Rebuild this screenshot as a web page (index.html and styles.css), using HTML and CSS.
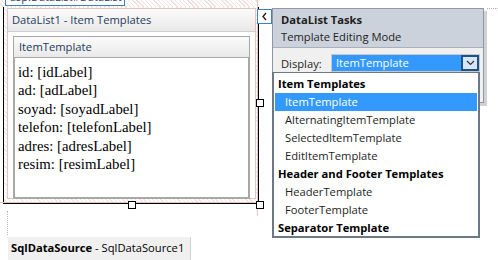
FILE: index.html
```html
<!DOCTYPE html>
<html lang="en">
<head>
    <meta charset="UTF-8">
    <title>DataList Designer</title>
    <link rel="stylesheet" href="styles.css">
</head>
<body>
    <div class="canvas">
        <div class="control-tag"><span class="tag-box"><span class="tag-text">asp:DataList#DataList1</span></span></div>
        <div class="top-dots"></div>

        <div class="datalist">
            <div class="templates-panel">
                <div class="panel-title">DataList1 - Item Templates</div>
                <div class="template-box">
                    <div class="template-title">ItemTemplate</div>
                    <div class="template-body">
                        <div>id: [idLabel]</div>
                        <div>ad: [adLabel]</div>
                        <div>soyad: [soyadLabel]</div>
                        <div>telefon: [telefonLabel]</div>
                        <div>adres: [adresLabel]</div>
                        <div>resim: [resimLabel]</div>
                    </div>
                </div>
            </div>
        </div>

        <div class="guide guide-h"></div>
        <div class="guide guide-v"></div>
        <div class="handle handle-right"></div>
        <div class="handle handle-bottom"></div>
        <div class="handle handle-corner"></div>

        <div class="side-dots"></div>
        <div class="source-tag"><b>SqlDataSource</b> - SqlDataSource1</div>

        <button class="smart-tag">
            <svg width="7" height="9" viewBox="0 0 7 9"><path d="M5 1 L2 4.5 L5 8" fill="none" stroke="#1e1e1e" stroke-width="1.3"/></svg>
        </button>

        <div class="tasks">
            <div class="tasks-head">
                <div class="tasks-title">DataList Tasks</div>
                <div class="tasks-sub">Template Editing Mode</div>
            </div>
            <div class="tasks-row">
                <span class="tasks-label">Display:</span>
                <div class="combo">
                    <span class="combo-value">ItemTemplate</span>
                    <span class="combo-btn">
                        <svg width="9" height="6" viewBox="0 0 9 6"><path d="M1 1 L4.5 4.5 L8 1" fill="none" stroke="#333" stroke-width="1.2"/></svg>
                    </span>
                </div>
            </div>
        </div>

        <ul class="dropdown">
            <li class="group">Item Templates</li>
            <li class="item selected">ItemTemplate</li>
            <li class="item">AlternatingItemTemplate</li>
            <li class="item">SelectedItemTemplate</li>
            <li class="item">EditItemTemplate</li>
            <li class="group">Header and Footer Templates</li>
            <li class="item">HeaderTemplate</li>
            <li class="item">FooterTemplate</li>
            <li class="group">Separator Template</li>
        </ul>
    </div>
</body>
</html>
```

FILE: styles.css
```css
body {
    margin: 0;
    background: #ffffff;
    font-family: "Open Sans", "Noto Sans", sans-serif;
    font-size: 11px;
    color: #1e1e1e;
}

.canvas {
    position: relative;
    width: 498px;
    height: 260px;
    overflow: hidden;
}

.control-tag {
    width: 258px;
    height: 7px;
    background: repeating-linear-gradient(45deg, #ffffff 0, #ffffff 2px, #f3dede 2px, #f3dede 3px);
}

.tag-box {
    display: block;
    width: 110px;
    margin-left: 5px;
    height: 5px;
    padding: 0 4px;
    border: 1px solid #3f7fc4;
    border-top: none;
    background: #ffffff;
    overflow: hidden;
}

.tag-text {
    display: block;
    margin-top: -10px;
    line-height: 14px;
    color: #1e395b;
    font-size: 11px;
    white-space: nowrap;
}

.top-dots {
    position: absolute;
    left: 487px;
    top: 8px;
    width: 11px;
    border-top: 1px dotted #b0b0b0;
}

.datalist {
    margin-left: 3px;
    width: 256px;
    height: 197px;
    border-left: 1px solid #000000;
    border-right: 1px solid #000000;
    border-bottom: 1px solid #000000;
    background: repeating-linear-gradient(45deg, #ffffff 0, #ffffff 2px, #f6e4e4 2px, #f6e4e4 3px);
    padding: 1px 3px 0 3px;
    box-sizing: border-box;
}

.templates-panel {
    width: 249px;
    height: 191px;
    border: 1px solid #dcc6c6;
    background: #ffffff;
    box-sizing: border-box;
}

.panel-title {
    height: 22px;
    line-height: 21px;
    padding-left: 4px;
    background: linear-gradient(#fbfbfb, #e9e9e9);
    border-bottom: 1px solid #d0d0d0;
    color: #1e395b;
    font-size: 11.2px;
}

.template-box {
    margin: 4px 5px 0 5px;
}

.template-title {
    height: 20px;
    line-height: 19px;
    padding-left: 5px;
    background: linear-gradient(#fbfbfb, #e9e9e9);
    border: 1px solid #a8a8a8;
    color: #1e395b;
    font-size: 11.2px;
}

.template-body {
    height: 141px;
    border: 2px solid #a8a8a8;
    border-top: none;
    padding: 5px 0 0 3px;
    box-sizing: border-box;
    font-family: "Liberation Serif", serif;
    font-size: 14.8px;
    line-height: 18.4px;
    color: #000000;
}

.guide {
    position: absolute;
    background: #e7c4c4;
}

.guide-h {
    left: 0;
    top: 202px;
    width: 262px;
    height: 1px;
}

.guide-v {
    left: 257px;
    top: 0;
    width: 1px;
    height: 216px;
}

.handle {
    position: absolute;
    width: 6px;
    height: 6px;
    border: 1px solid #000000;
    background: #ffffff;
}

.handle-right {
    left: 256px;
    top: 99px;
}

.handle-bottom {
    left: 128px;
    top: 201px;
}

.handle-corner {
    left: 256px;
    top: 201px;
}

.side-dots {
    position: absolute;
    left: 7px;
    top: 211px;
    height: 24px;
    border-left: 1px dotted #b8b8b8;
}

.source-tag {
    position: absolute;
    left: 8px;
    top: 237px;
    height: 23px;
    line-height: 22px;
    padding: 0 6px 0 3px;
    background: #f0f0f0;
    border-right: 1px solid #d0d0d0;
    font-size: 11.2px;
    color: #000000;
}

.smart-tag {
    position: absolute;
    left: 257px;
    top: 9px;
    width: 15px;
    height: 15px;
    padding: 0;
    border: 1px solid #3f7fc4;
    background: #ffffff;
    display: flex;
    align-items: center;
    justify-content: center;
}

.tasks {
    position: absolute;
    left: 272px;
    top: 8px;
    width: 212px;
    height: 95px;
    border: 1px solid #8f98a8;
    background: #f0f0f0;
    box-shadow: 3px 3px 0 rgba(0, 0, 0, 0.18);
    box-sizing: border-box;
}

.tasks-head {
    height: 39px;
    padding: 2px 0 0 8px;
    background: #ccd2dc;
    border-bottom: 1px solid #a8b0bc;
    box-sizing: border-box;
}

.tasks-title {
    font-weight: bold;
    font-size: 11.2px;
    line-height: 17px;
}

.tasks-sub {
    font-size: 11.2px;
    line-height: 17px;
}

.tasks-row {
    display: flex;
    align-items: center;
    padding: 6px 0 0 8px;
}

.tasks-label {
    width: 50px;
    font-size: 11.2px;
}

.combo {
    display: flex;
    width: 149px;
    height: 18px;
    border: 1px solid #c8c8c8;
    background: #3399ff;
    box-sizing: border-box;
}

.combo-value {
    flex: 1;
    padding-left: 4px;
    color: #ffffff;
    font-size: 11.2px;
    line-height: 16px;
}

.combo-btn {
    width: 14px;
    border: 2px solid #1f5289;
    background: #d6e8f8;
    display: flex;
    align-items: center;
    justify-content: center;
}

.dropdown {
    position: absolute;
    left: 272px;
    top: 72px;
    width: 208px;
    height: 166px;
    margin: 0;
    padding: 2px 1px 0 1px;
    list-style: none;
    background: #ffffff;
    border: 2px solid #6e7785;
    border-top: 1px solid #6e7785;
    box-sizing: border-box;
}

.dropdown li {
    height: 18px;
    line-height: 18px;
    font-size: 11.2px;
}

.dropdown .group {
    padding-left: 3px;
    font-weight: bold;
    color: #000000;
}

.dropdown .item {
    padding-left: 10px;
    color: #1e1e1e;
}

.dropdown .selected {
    background: #3399ff;
    color: #ffffff;
}
```
